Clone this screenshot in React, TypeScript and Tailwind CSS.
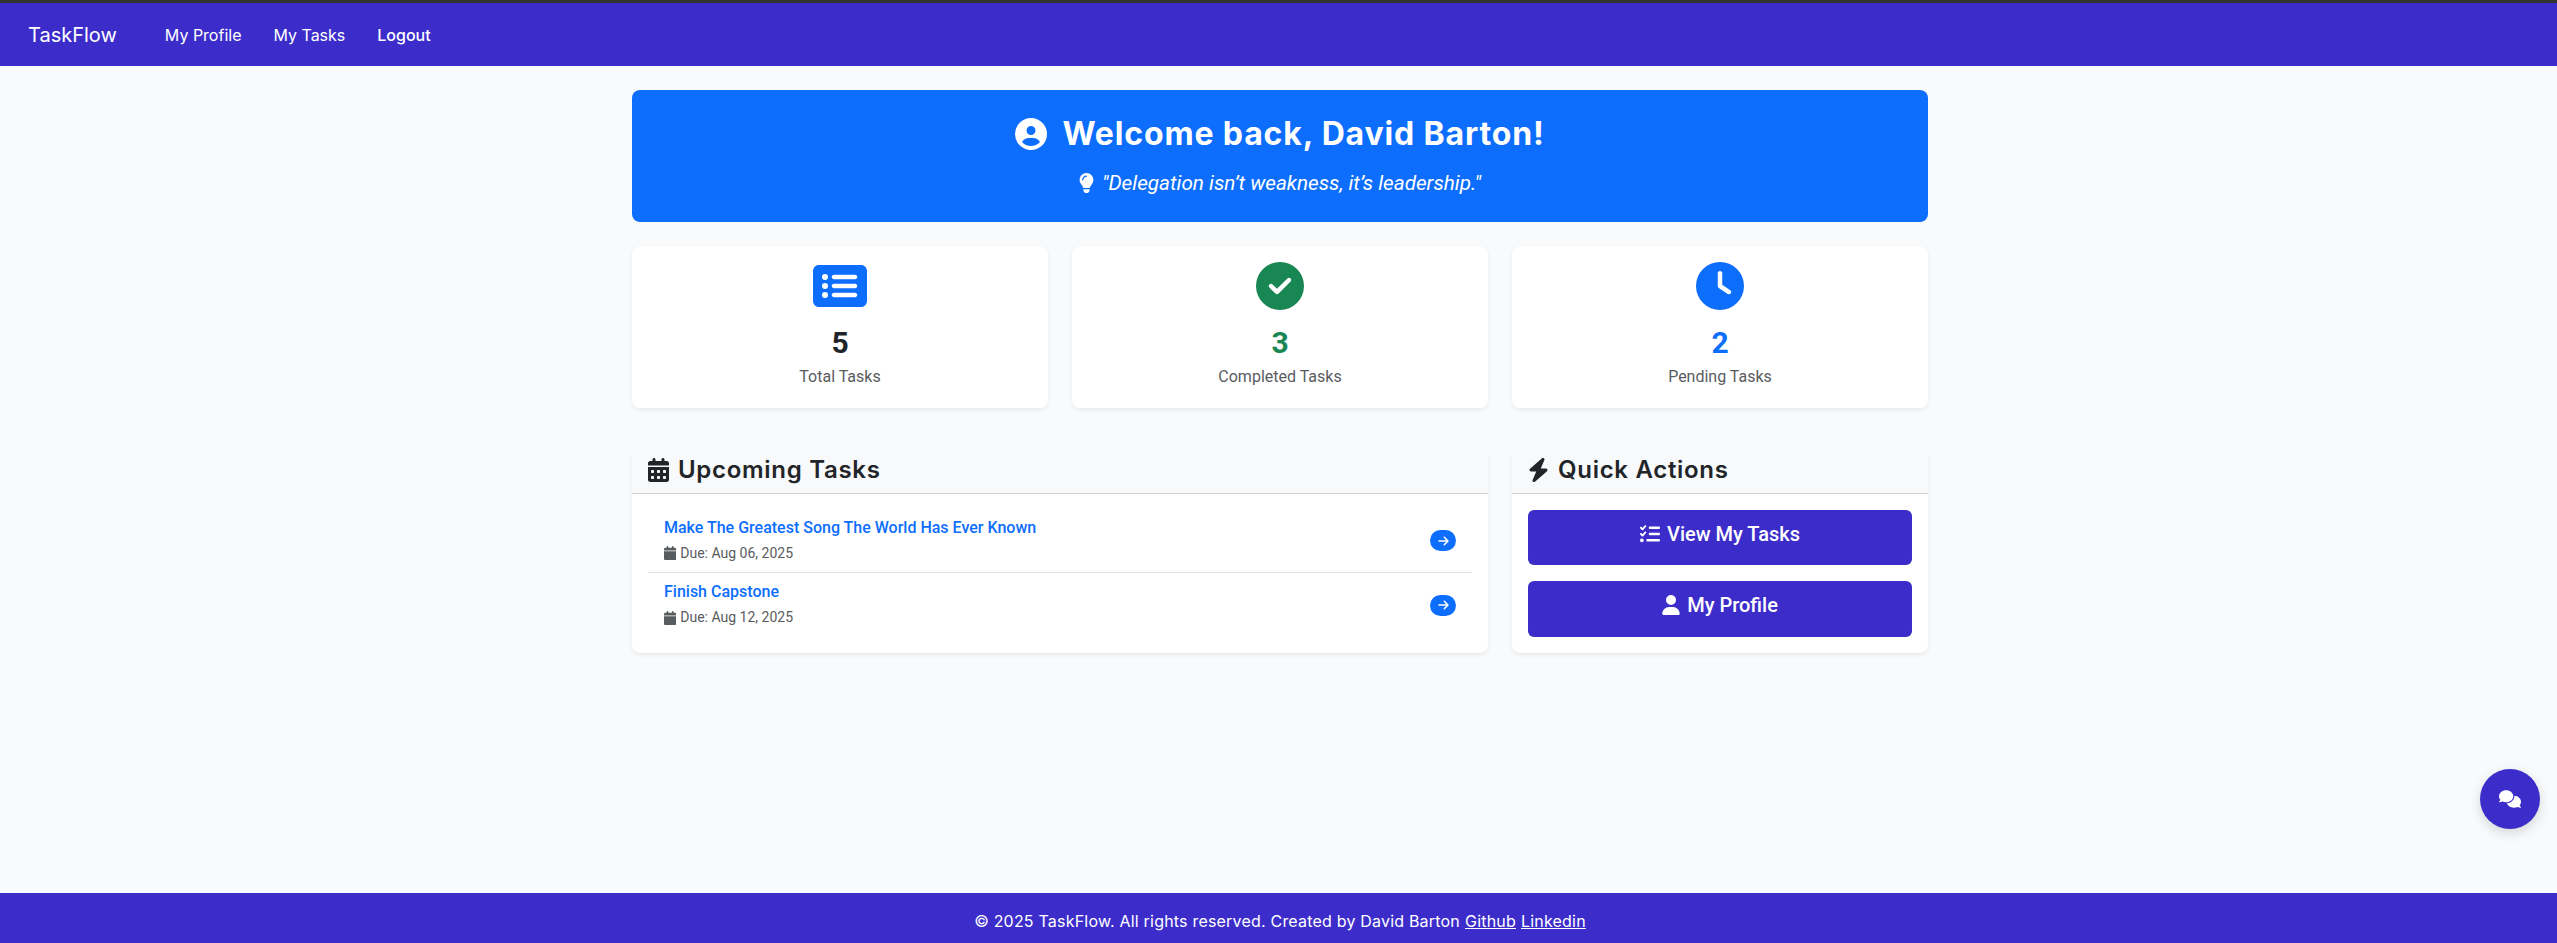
import React from "react";
import {
  FaArrowRight,
  FaBolt,
  FaCalendar,
  FaCalendarDays,
  FaCircleCheck,
  FaCircleUser,
  FaClock,
  FaComments,
  FaLightbulb,
  FaListCheck,
  FaRectangleList,
  FaUser,
} from "react-icons/fa6";

const heading = "[font-family:Inter,'Liberation_Sans',sans-serif]";
const body = "[font-family:Roboto,'Liberation_Sans',sans-serif]";

function Stat({
  icon,
  value,
  label,
  color,
}: {
  icon: React.ReactNode;
  value: string;
  label: string;
  color: string;
}) {
  return (
    <div className="flex h-[162px] flex-col items-center rounded-lg bg-white pt-4 shadow-[0_2px_4px_rgba(0,0,0,0.075)]">
      <div className="flex h-12 items-center">{icon}</div>
      <div className={`mt-[16px] text-[30px] leading-[34px] font-bold ${color}`}>{value}</div>
      <div className="mt-[5px] text-base leading-6 text-[#595c5f]">{label}</div>
    </div>
  );
}

function TaskRow({ title, due, last }: { title: string; due: string; last?: boolean }) {
  return (
    <div
      className={`flex items-center justify-between pl-4 pr-4 ${
        last ? "h-[64px]" : "h-[64px] border-b border-[#dee2e6]"
      }`}
    >
      <div className="pb-[2px]">
        <div className="text-base leading-6 font-medium text-[#0d6efd]">{title}</div>
        <div className="mt-[3px] flex items-center gap-[4px] text-sm leading-[21px] text-[#595c5f]">
          <FaCalendar className="h-[14px] w-[12.25px]" />
          <span>Due: {due}</span>
        </div>
      </div>
      <div className="flex h-[21px] w-[26px] items-center justify-center rounded-full bg-[#0d6efd] text-white">
        <FaArrowRight className="h-[12px] w-[11px]" />
      </div>
    </div>
  );
}

function CardHeader({ icon, title }: { icon: React.ReactNode; title: string }) {
  return (
    <div
      className={`flex h-[44px] items-center gap-[9px] rounded-t-lg border-b border-[#cfd0d1] bg-[#f8f9fb] px-4 pb-[4px] text-[24px] leading-[36px] font-semibold tracking-[0.7px] text-[#212529] ${heading}`}
    >
      {icon}
      <span>{title}</span>
    </div>
  );
}

function ActionButton({ icon, label, tall }: { icon: React.ReactNode; label: string; tall?: boolean }) {
  return (
    <div
      className={`flex items-start justify-center gap-[7px] rounded-md bg-[#3c2dcb] pt-[9px] text-[20px] leading-[30px] font-medium text-white ${
        tall ? "h-[56px]" : "h-[55px]"
      }`}
    >
      <span className="flex h-[30px] items-center">{icon}</span>
      <span>{label}</span>
    </div>
  );
}

export default function App() {
  return (
    <div className="h-screen w-screen overflow-hidden">
      <div className={`relative flex h-[943px] w-[2560px] flex-col bg-[#f8fafc] ${body}`}>
        <nav
          className={`flex h-[66px] shrink-0 items-center border-t-[3px] border-[#333333] bg-[#3c2dcb] pl-7 text-white ${heading}`}
        >
          <span className="text-[20px] leading-[30px]">TaskFlow</span>
          <div className="ml-[48px] flex items-center gap-8 text-[16px] leading-6 font-normal">
            <span>My Profile</span>
            <span>My Tasks</span>
            <span className="font-medium">Logout</span>
          </div>
        </nav>

        <main className="mx-auto flex w-[1296px] flex-1 flex-col pt-6">
          <section className="flex h-[132px] flex-col items-center rounded-lg bg-[#0d6efd] pt-[20px] text-white">
            <div className={`flex items-center gap-[15px] text-[32px] leading-[48px] font-bold tracking-[0.85px] ${heading}`}>
              <FaCircleUser className="h-8 w-8" />
              <span>Welcome back, David Barton!</span>
            </div>
            <div className="mt-[10px] flex items-center gap-[8px] text-[20.7px] leading-[30px] font-normal italic">
              <FaLightbulb className="h-5 w-[15px] not-italic" />
              <span>"Delegation isn’t weakness, it’s leadership."</span>
            </div>
          </section>

          <section className="mt-6 grid grid-cols-3 gap-6">
            <Stat
              icon={<FaRectangleList className="h-12 w-[54px] text-[#0d6efd]" />}
              value="5"
              label="Total Tasks"
              color="text-[#212529]"
            />
            <Stat
              icon={<FaCircleCheck className="h-12 w-12 text-[#198754]" />}
              value="3"
              label="Completed Tasks"
              color="text-[#198754]"
            />
            <Stat
              icon={<FaClock className="h-12 w-12 text-[#0d6efd]" />}
              value="2"
              label="Pending Tasks"
              color="text-[#0d6efd]"
            />
          </section>

          <section className="mt-[42px] grid grid-cols-[856px_416px] gap-6">
            <div className="h-[203px] rounded-lg bg-white shadow-[0_2px_4px_rgba(0,0,0,0.075)]">
              <CardHeader icon={<FaCalendarDays className="h-6 w-[21px]" />} title="Upcoming Tasks" />
              <div className="px-4 pt-[15px]">
                <TaskRow title="Make The Greatest Song The World Has Ever Known" due="Aug 06, 2025" />
                <TaskRow title="Finish Capstone" due="Aug 12, 2025" last />
              </div>
            </div>
            <div className="h-[203px] rounded-lg bg-white shadow-[0_2px_4px_rgba(0,0,0,0.075)]">
              <CardHeader icon={<FaBolt className="h-6 w-[21px]" />} title="Quick Actions" />
              <div className="flex flex-col gap-4 px-4 pt-4">
                <ActionButton icon={<FaListCheck className="h-5 w-5" />} label="View My Tasks" />
                <ActionButton icon={<FaUser className="h-5 w-[18px]" />} label="My Profile" tall />
              </div>
            </div>
          </section>
        </main>

        <footer
          className={`flex h-[50px] shrink-0 items-start justify-center gap-[5px] bg-[#3c2dcb] pt-[16px] text-[16px] leading-6 tracking-[0.2px] text-white ${heading}`}
        >
          <span>© 2025 TaskFlow. All rights reserved. Created by David Barton</span>
          <span className="underline">Github</span>
          <span className="underline">Linkedin</span>
        </footer>

        <div className="absolute right-5 bottom-[114px] flex h-[60px] w-[60px] items-center justify-center rounded-full bg-[#3c2dcb] text-white shadow-[0_4px_12px_rgba(0,0,0,0.15)]">
          <FaComments className="h-5 w-[22px]" />
        </div>
      </div>
    </div>
  );
}
